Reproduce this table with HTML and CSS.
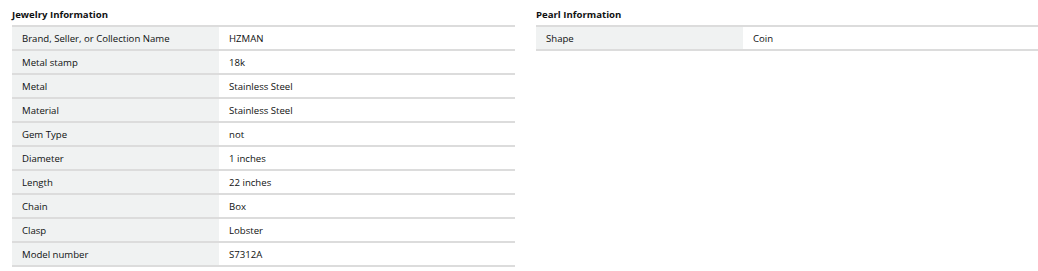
FILE: index.html
```html
<!DOCTYPE html>
<html>
<head>
<meta charset="utf-8">
<link rel="stylesheet" href="styles.css">
</head>
<body>
<div class="page">
  <section class="panel">
    <h2 class="title">Jewelry Information</h2>
    <table class="specs">
      <tr><th>Brand, Seller, or Collection Name</th><td>HZMAN</td></tr>
      <tr><th>Metal stamp</th><td>18k</td></tr>
      <tr><th>Metal</th><td>Stainless Steel</td></tr>
      <tr><th>Material</th><td>Stainless Steel</td></tr>
      <tr><th>Gem Type</th><td>not</td></tr>
      <tr><th>Diameter</th><td>1 inches</td></tr>
      <tr><th>Length</th><td>22 inches</td></tr>
      <tr><th>Chain</th><td>Box</td></tr>
      <tr><th>Clasp</th><td>Lobster</td></tr>
      <tr><th>Model number</th><td>S7312A</td></tr>
    </table>
  </section>
  <section class="panel right">
    <h2 class="title">Pearl Information</h2>
    <table class="specs">
      <tr><th>Shape</th><td>Coin</td></tr>
    </table>
  </section>
</div>
</body>
</html>
```

FILE: styles.css
```css
html, body {
  margin: 0;
  padding: 0;
  background: #ffffff;
}
body {
  font-family: "Open Sans", "Liberation Sans", sans-serif;
  color: #0f1111;
}
.page {
  display: flex;
  gap: 21px;
  padding: 6px 0 0 12px;
}
.panel {
  width: 503px;
}
.panel.right {
  width: 502px;
}
.title {
  margin: 0;
  height: 19px;
  line-height: 17px;
  font-size: 9.6px;
  font-weight: 700;
}
.specs {
  width: 100%;
  border-collapse: collapse;
  border-top: 2px solid #dcdcdc;
  font-size: 9.6px;
}
.specs th,
.specs td {
  height: 24px;
  padding: 1px 10px 0;
  box-sizing: border-box;
  text-align: left;
  font-weight: 400;
  border-bottom: 2px solid #dcdcdc;
  vertical-align: middle;
}
.specs th {
  width: 207px;
  background: #f0f2f2;
}
```
